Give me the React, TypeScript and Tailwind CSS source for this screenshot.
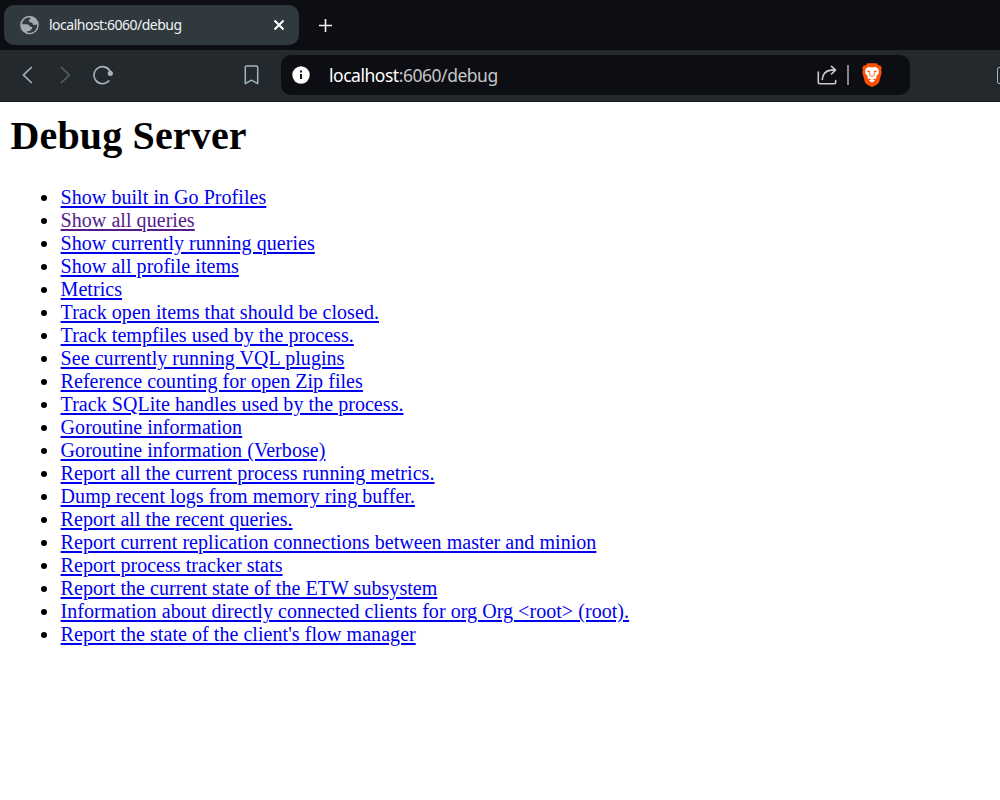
const links: string[] = [
  'Show built in Go Profiles',
  'Show all queries',
  'Show currently running queries',
  'Show all profile items',
  'Metrics',
  'Track open items that should be closed.',
  'Track tempfiles used by the process.',
  'See currently running VQL plugins',
  'Reference counting for open Zip files',
  'Track SQLite handles used by the process.',
  'Goroutine information',
  'Goroutine information (Verbose)',
  'Report all the current process running metrics.',
  'Dump recent logs from memory ring buffer.',
  'Report all the recent queries.',
  'Report current replication connections between master and minion',
  'Report process tracker stats',
  'Report the current state of the ETW subsystem',
  'Information about directly connected clients for org Org <root> (root).',
  "Report the state of the client's flow manager",
];

const visited = 'Show all queries';

function GlobeIcon() {
  return (
    <svg className="ml-4 size-5 shrink-0" viewBox="0 0 20 20">
      <circle cx="9.5" cy="10" r="9.3" fill="#a5aab2" />
      <path d="M9.800 2.400C5.500 2.200 2.500 5.300 2 9.200l4.500.1c2 .1 3.200.8 3.400 2.400h2.200c.6 1.700-.2 2.900-1.700 2.900v1.300H7.300v1.700c3.500.8 7-.6 8.800-3.700 1-1.700 1.200-3.300.9-5-1.200 1.300-2.400 1.500-3.600.9-.9-.5-1-1.300-.9-2.100-1.800.1-3-.3-3.500-1.400-.5-1.200.2-2.100 1.600-2.400.1-.6-.2-1-.8-1.500z" fill="#30393e" />
    </svg>
  );
}

function BraveIcon() {
  return (
    <svg className="ml-[13px] h-6 w-5 shrink-0" viewBox="0 0 20 24">
      <path d="M5.500.2h9l2 2.200 1.700-.1 1.600 2.500-.7 1.900.7 2.200-2.500 9.600c-.4 1.400-1.300 2.300-2.600 3.200L10 24l-4.700-2.300c-1.300-.9-2.200-1.800-2.600-3.200L.2 8.900l.7-2.200-.7-1.900 1.600-2.500 1.700.1z" fill="#fb5208" />
      <path d="M7.500 4 10 4.600l2.500-.6 2.400.4 2.200 3.200-.6 1 .4 1.500-2.700 3.500.4 1.300-1 1.100-1.500-.3-1.200.9 2.200 1.200L10 19.400l-3.100-1.600 2.200-1.200-1.200-.9-1.500.3-1-1.100.4-1.300-2.700-3.500.4-1.500-.6-1 2.200-3.200z" fill="#fff" />
      <path d="m5 7.400 3.300.6-.5.900.7 3.300 1.500.9 1.500-.9.700-3.300-.5-.9 3.300-.6-.8 1.500-1.500.3-.1 2.900L10 13.900l-2.600-1.800-.1-2.900-1.500-.3z" fill="#fb5208" />
    </svg>
  );
}

function TabStrip() {
  return (
    <div className="flex h-[50px] items-start bg-[#0d0e13] pl-1 pt-[5px]">
      <div className="flex h-10 w-[295px] items-center rounded-[10px] bg-[#30393e]">
        <GlobeIcon />
        <span className="ml-[9px] w-[224px] shrink-0 whitespace-nowrap font-['Noto_Sans',sans-serif] text-[14px] leading-5 tracking-[-0.5px] text-[#f1f2f3]">
          localhost:6060/debug
        </span>
        <svg className="size-3 shrink-0" viewBox="0 0 12 12" fill="none" stroke="#fff" strokeWidth="2">
          <path d="m1.500 1.500 9 9m0-9-9 9" />
        </svg>
      </div>
      <svg className="ml-[19px] mt-[13px] size-[15px]" viewBox="0 0 15 15" fill="none" stroke="#f4f4f5" strokeWidth="1.600">
        <path d="M7.500 1v13M1 7.500h13" />
      </svg>
    </div>
  );
}

function Toolbar() {
  return (
    <div className="flex h-[52px] items-center overflow-hidden border-b border-[#191e21] bg-[#23292d] pb-px">
      <svg className="ml-[21px] size-5 shrink-0" viewBox="0 0 20 20" fill="none" stroke="#a3b5bf" strokeWidth="1.700">
        <path d="M10.800 2 2.500 10l8.300 8" />
      </svg>
      <svg className="ml-[18px] size-5 shrink-0" viewBox="0 0 20 20" fill="none" stroke="#555f64" strokeWidth="1.700">
        <path d="m2 2 8.300 8L2 18" />
      </svg>
      <svg className="ml-[14px] size-5 shrink-0" viewBox="0 0 20 20" fill="none">
        <path d="M15.900 15.800A8.500 8.500 0 1 1 17.400 7" stroke="#a3b5bf" strokeWidth="1.600" strokeLinecap="round" />
        <circle cx="17.300" cy="8.300" r="2.600" fill="#a3b5bf" />
      </svg>
      <svg className="ml-[131px] h-5 w-[15px] shrink-0" viewBox="0 0 15 20" fill="none" stroke="#a3b5bf" strokeWidth="1.500" strokeLinejoin="round">
        <path d="M2.500 1h10q1.200 0 1.200 1.200v16.500L7.500 15.200l-6.200 3.500V2.200Q1.300 1 2.500 1Z" />
      </svg>
      <div className="ml-[22px] flex h-10 w-[629px] shrink-0 items-center rounded-[10px] bg-[#0d0e13]">
        <svg className="ml-[11px] size-[18px] shrink-0" viewBox="0 0 18 18">
          <circle cx="9" cy="9" r="8.700" fill="#fff" />
          <path d="M8 8h2v5H8zm0-3.500h2v2H8z" fill="#15161a" />
        </svg>
        <div className="ml-[19px] w-[488px] shrink-0 whitespace-nowrap pb-px font-['Noto_Sans',sans-serif] text-[17.500px] leading-6 tracking-[-0.47px] text-[#c5c6c8]">
          <span className="text-white">localhost</span>:6060/debug
        </div>
        <svg className="size-5 shrink-0" viewBox="0 0 20 20" fill="none" stroke="#c9cacc" strokeWidth="1.600" strokeLinecap="round" strokeLinejoin="round">
          <path d="M1.300 7v10q0 1.700 1.700 1.700h14q1.700 0 1.700-1.700v-1.500M5.300 14.500c.2-5.500 3-8.700 8.700-9.400h4.500M14.500 1.300 18.500 5.100l-4 3.900" />
        </svg>
        <div className="ml-[10px] h-5 w-[1.500px] shrink-0 bg-[#85868a]" />
        <BraveIcon />
      </div>
      <div className="ml-[87px] h-[17px] w-[18px] shrink-0 rounded-[2px] border-[1.500px] border-[#a3b5bf]" />
    </div>
  );
}

export default function App() {
  return (
    <div className="h-[800px] w-[1000px] overflow-hidden bg-white">
      <TabStrip />
      <Toolbar />
      <main className="px-[10px] pt-[11px] font-['Liberation_Serif',serif] text-black">
        <h1 className="pl-[0.500px] text-[40px] font-bold leading-[46px] tracking-[0.15px]">Debug Server</h1>
        <ul className="mt-[27px] list-disc pl-[50px] text-[20px] leading-[23px] tracking-[0.05px]">
          {links.map((label) => (
            <li key={label}>
              <a
                href="#"
                className={
                  label === visited
                    ? 'ml-[0.600px] text-[#551a8b] underline decoration-2 underline-offset-2'
                    : 'ml-[0.600px] text-[#0000ee] underline decoration-2 underline-offset-2'
                }
              >
                {label}
              </a>
            </li>
          ))}
        </ul>
      </main>
    </div>
  );
}
